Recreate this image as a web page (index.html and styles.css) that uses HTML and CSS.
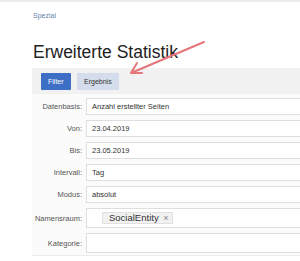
FILE: index.html
```html
<!DOCTYPE html>
<html lang="de">
<head>
<meta charset="UTF-8">
<title>Erweiterte Statistik</title>
<link rel="stylesheet" href="styles.css">
</head>
<body>

<div class="topline"></div>

<div class="page">
  <a class="crumb" href="#">Spezial</a>
  <h1>Erweiterte Statistik</h1>

  <div class="panel">
    <div class="tabs">
      <span class="tab active">Filter</span>
      <span class="tab">Ergebnis</span>
    </div>
    <div class="form">
      <label>Datenbasis:</label>
      <div class="field">Anzahl erstellter Seiten</div>
      <label>Von:</label>
      <div class="field">23.04.2019</div>
      <label>Bis:</label>
      <div class="field">23.05.2019</div>
      <label>Intervall:</label>
      <div class="field">Tag</div>
      <label>Modus:</label>
      <div class="field">absolut</div>
      <label>Namensraum:</label>
      <div class="field tall"><span class="tag">SocialEntity <span class="x">&times;</span></span></div>
      <label>Kategorie:</label>
      <div class="field tall"></div>
    </div>
  </div>
</div>

<svg class="arrow" width="300" height="261" viewBox="0 0 300 261">
  <path d="M204 42 L131 73 M131 73 L137 63 M131 73 L142 73" fill="none" stroke="#e5767b" stroke-width="2" stroke-linecap="round" stroke-linejoin="round"/>
</svg>

</body>
</html>
```

FILE: styles.css
```css
* { box-sizing: border-box; }
body { margin: 0; background: #fff; font-family: 'Liberation Sans', Arial, sans-serif; color: #333; overflow: hidden; position: relative; }
.topline { height: 2px; background: #ececec; }
.page { padding: 10px 0 0 32px; }
.crumb { display: block; font-size: 7px; color: #5f82a8; text-decoration: none; height: 12px; margin-left: 1px; }
h1 { font-weight: normal; font-size: 17.5px; color: #222; margin: 18px 0 0 1px; line-height: 20px; height: 26px; }
.panel { border-bottom: 1px solid #ececec; }
.tabs { background: #f1f1f1; padding: 5px 0 4px 9px; display: flex; gap: 6px; }
.tab { display: block; height: 17px; line-height: 17px; font-size: 7px; background: #d5ddec; color: #333; padding: 0 7px; border-radius: 1px; }
.tab.active { background: #3d6fc6; color: #fff; width: 30px; }
.form { background: #fbfbfb; padding: 4px 0 2px 0; display: grid; grid-template-columns: 50px 1fr; column-gap: 4px; row-gap: 5px; }
label { font-size: 7.5px; color: #555; text-align: right; align-self: center; }
.field { height: 17px; border: 1px solid #dedede; border-right: none; background: #fff; font-size: 7.5px; color: #333; line-height: 15px; padding-left: 5px; }
.field.tall { height: 20px; display: flex; align-items: center; }
.tag { display: inline-block; background: #f1f1f1; border: 1px solid #e0e0e0; height: 12px; line-height: 10px; font-size: 9.5px; color: #333; padding: 0 3px 0 6px; margin-left: 10px; }
.tag .x { color: #888; font-size: 9px; margin-left: 2px; }
.arrow { position: absolute; left: 0; top: 0; }
```
